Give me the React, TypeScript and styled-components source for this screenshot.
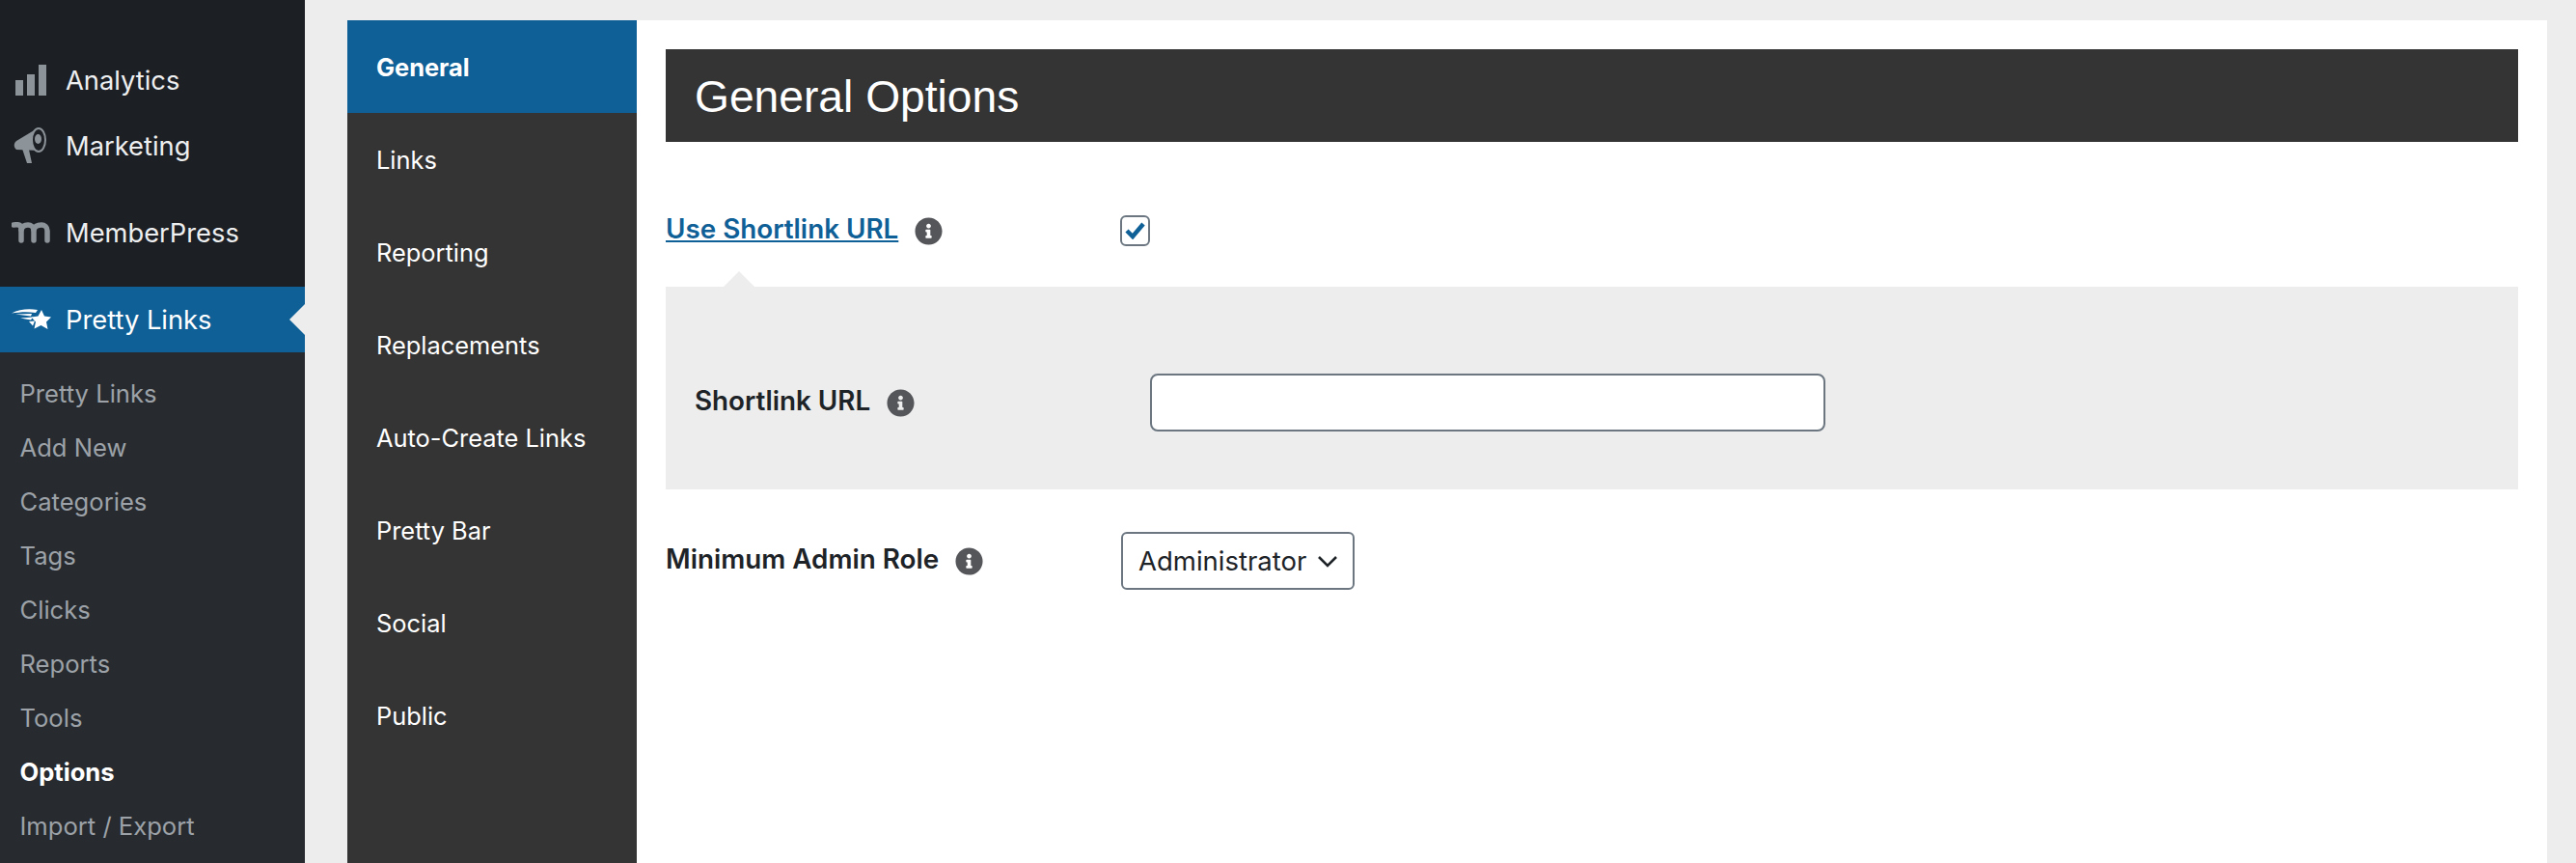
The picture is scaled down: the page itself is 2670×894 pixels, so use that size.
import styled, { createGlobalStyle } from 'styled-components';
import { FaInfoCircle } from 'react-icons/fa';

const GlobalStyle = createGlobalStyle`
  html, body { margin: 0; padding: 0; height: 100%; overflow: hidden; background: #ededed; }
  body { font-family: Inter, "Liberation Sans", sans-serif; -webkit-font-smoothing: antialiased; }
`;

const Page = styled.div`
  display: flex;
  height: 894px;
  overflow: hidden;
  background: #ededed;
`;

/* wp admin menu */
const Sidebar = styled.nav`
  flex: 0 0 316px;
  padding-top: 49px;
  background: #1c1f24;
`;

const MenuItem = styled.div<{ $active?: boolean; $gap?: boolean }>`
  position: relative;
  display: flex;
  align-items: center;
  height: 68px;
  margin-top: ${p => (p.$gap ? '22px' : '0')};
  background: ${p => (p.$active ? '#0f6097' : 'transparent')};
  color: ${p => (p.$active ? '#fff' : '#eeeff0')};
  font-size: 27.3px;
`;

const MenuIcon = styled.span`
  flex: 0 0 68px;
  display: flex;
  align-items: center;
  justify-content: center;
  padding-right: 4px;
  box-sizing: border-box;
`;

const Notch = styled.span`
  position: absolute;
  right: 0;
  top: 18px;
  border: 16px solid transparent;
  border-left: 0;
  border-right-color: #ededed;
`;

const SubMenu = styled.div`
  padding: 15px 0 12px;
  background: #272b2f;
`;

const SubItem = styled.div<{ $current?: boolean }>`
  height: 56px;
  padding-left: 20.5px;
  line-height: 56px;
  font-size: 25.6px;
  font-weight: ${p => (p.$current ? 700 : 400)};
  color: ${p => (p.$current ? '#fff' : '#9ca2a8')};
`;

const Main = styled.main`
  flex: 1;
  padding: 21px 30px 0 44px;
`;

const Card = styled.div`
  display: flex;
  height: 873px;
  background: #fff;
`;

const Tabs = styled.div`
  flex: 0 0 300px;
  background: #343434;
`;

const Tab = styled.div<{ $active?: boolean }>`
  height: 96px;
  padding-left: 30px;
  line-height: 98px;
  font-size: 25.4px;
  font-weight: ${p => (p.$active ? 700 : 400)};
  color: #fff;
  background: ${p => (p.$active ? '#0f6097' : 'transparent')};
`;

const Content = styled.div`
  flex: 1;
  padding: 30px 30px 0;
`;

const Heading = styled.h1`
  height: 96px;
  margin: 0;
  padding-left: 30px;
  background: #343434;
  color: #fff;
  font: 400 46.2px/98px "Liberation Sans", Arial, sans-serif;
`;

const Row = styled.div<{ $top: number }>`
  display: flex;
  align-items: center;
  margin-top: ${p => p.$top}px;
`;

const LabelCell = styled.div`
  flex: 0 0 472px;
  display: flex;
  align-items: center;
  gap: 17px;
`;

const Label = styled.span`
  padding-bottom: 4px;
  font-size: 27.8px;
  font-weight: 600;
  color: #1d2327;
`;

const LinkLabel = styled(Label).attrs({ as: 'a', href: '#' })`
  padding-bottom: 4px;
  color: #0f6097;
  text-decoration: underline;
`;

const Info = styled(FaInfoCircle)`
  width: 29px;
  height: 29px;
  color: #54565a;
`;

const Check = styled.span`
  display: flex;
  align-items: center;
  justify-content: center;
  box-sizing: border-box;
  width: 31px;
  height: 32px;
  margin-left: -1px;
  border: 2px solid #6b7680;
  border-radius: 6px;
  background: #fff;
`;

const Panel = styled.div`
  position: relative;
  margin-top: 39px;
  padding: 90px 30px 60px;
  background: #ededed;

  &::before {
    content: '';
    position: absolute;
    left: 60px;
    top: -16px;
    border: 16px solid transparent;
    border-top: 0;
    border-bottom-color: #ededed;
  }
`;

const TextInput = styled.input`
  box-sizing: border-box;
  width: 700px;
  height: 60px;
  border: 2px solid #6b7680;
  border-radius: 8px;
  background: #fff;
`;

const SelectWrap = styled.span`
  position: relative;
  display: inline-flex;
`;

const Select = styled.select`
  box-sizing: border-box;
  width: 242px;
  height: 60px;
  padding: 0 0 0 16px;
  border: 2px solid #6b7680;
  border-radius: 6px;
  background: #fff;
  color: #1d2327;
  font: 400 27.5px Inter, sans-serif;
  appearance: none;
`;

const Chevron = styled.svg`
  position: absolute;
  right: 17px;
  top: 24px;
  width: 22px;
  height: 13px;
  pointer-events: none;
`;

const subItems = ['Pretty Links', 'Add New', 'Categories', 'Tags', 'Clicks', 'Reports', 'Tools', 'Options', 'Import / Export'];
const tabs = ['General', 'Links', 'Reporting', 'Replacements', 'Auto-Create Links', 'Pretty Bar', 'Social', 'Public'];

const App = () => {
  return (
    <Page>
      <GlobalStyle />
      <Sidebar>
        <MenuItem>
          <MenuIcon>
            <svg width="32" height="32" viewBox="0 0 32 32" fill="#8c9399">
              <rect x="0" y="16" width="8" height="16" />
              <rect x="12" y="10" width="8" height="22" />
              <rect x="24" y="0" width="8" height="32" />
            </svg>
          </MenuIcon>
          Analytics
        </MenuItem>
        <MenuItem>
          <MenuIcon>
            <svg width="48" height="46" viewBox="0 0 48 46" fill="#8c9399">
              <path d="M15 26l5 15h5l-3-14z" />
              <path d="M29 6L9 18c-3 2-3 7 0 9l24 1z" />
              <ellipse cx="32" cy="17" rx="7" ry="12" fill="#1c1f24" stroke="#8c9399" strokeWidth="2" />
              <ellipse cx="31.5" cy="16" rx="3.5" ry="5" />
            </svg>
          </MenuIcon>
          Marketing
        </MenuItem>
        <MenuItem $gap>
          <MenuIcon>
            <svg width="40" height="22" viewBox="0 0 40 22" fill="none" stroke="#8c9399" strokeWidth="5.5" strokeLinecap="round">
              <path d="M2 3c5-1 8 0 8 4v12" />
              <path d="M10 8c1-4 4-5 7-5s6 2 6 6v10" />
              <path d="M23 8c1-4 5-5 8-5s6 2 6 6v10" />
            </svg>
          </MenuIcon>
          MemberPress
        </MenuItem>
        <MenuItem $active $gap>
          <MenuIcon>
            <svg width="48" height="34" viewBox="0 0 48 34" fill="#fff">
              <polygon points="35,7 38,13.5 45,14.5 40,19.5 41.5,27 34.5,23 27.5,26.5 29,19.5 24.5,14.5 31.5,13.5" />
              <path d="M4 10.5C12 6.5 21 5.5 31 7l-2 3C19 8.5 12 9.5 4 10.5z" />
              <path d="M8 11.5l17-.5-1 2.5z" />
              <path d="M13 15.5l13-1-2 3z" />
              <path d="M22 19l6-.5-2 5z" />
            </svg>
          </MenuIcon>
          Pretty Links
          <Notch />
        </MenuItem>
        <SubMenu>
          {subItems.map(s => (
            <SubItem key={s} $current={s === 'Options'}>{s}</SubItem>
          ))}
        </SubMenu>
      </Sidebar>
      <Main>
        <Card>
          <Tabs>
            {tabs.map(t => (
              <Tab key={t} $active={t === 'General'}>{t}</Tab>
            ))}
          </Tabs>
          <Content>
            <Heading>General Options</Heading>
            <Row $top={73}>
              <LabelCell>
                <LinkLabel>Use Shortlink URL</LinkLabel>
                <Info />
              </LabelCell>
              <Check>
                <svg width="21" height="18" viewBox="0 0 21 18" fill="none" stroke="#0f6097" strokeWidth="4.5">
                  <path d="M2 9l6 6L19 2" />
                </svg>
              </Check>
            </Row>
            <Panel>
              <Row $top={0}>
                <LabelCell>
                  <Label>Shortlink URL</Label>
                  <Info />
                </LabelCell>
                <TextInput />
              </Row>
            </Panel>
            <Row $top={44}>
              <LabelCell>
                <Label>Minimum Admin Role</Label>
                <Info />
              </LabelCell>
              <SelectWrap>
                <Select defaultValue="Administrator">
                  <option>Administrator</option>
                </Select>
                <Chevron viewBox="0 0 22 13" fill="none" stroke="#1d2327" strokeWidth="2.6">
                  <path d="M2 2l9 9 9-9" />
                </Chevron>
              </SelectWrap>
            </Row>
          </Content>
        </Card>
      </Main>
    </Page>
  );
};

export default App;
